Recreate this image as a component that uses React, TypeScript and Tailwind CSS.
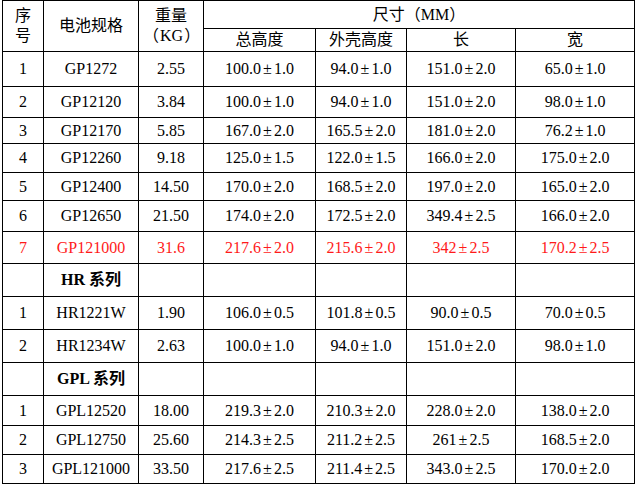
import React from "react";

// ─── Battery spec table ──────────────────────────────────────────────────────

type Row = {
  no?: string;
  model: string;
  weight?: string;
  total?: string;
  shell?: string;
  len?: string;
  wid?: string;
  h: number;
  red?: boolean;
  group?: boolean;
};

const rows: Row[] = [
  { no: "1", model: "GP1272", weight: "2.55", total: "100.0±1.0", shell: "94.0±1.0", len: "151.0±2.0", wid: "65.0±1.0", h: 35 },
  { no: "2", model: "GP12120", weight: "3.84", total: "100.0±1.0", shell: "94.0±1.0", len: "151.0±2.0", wid: "98.0±1.0", h: 31 },
  { no: "3", model: "GP12170", weight: "5.85", total: "167.0±2.0", shell: "165.5±2.0", len: "181.0±2.0", wid: "76.2±1.0", h: 26 },
  { no: "4", model: "GP12260", weight: "9.18", total: "125.0±1.5", shell: "122.0±1.5", len: "166.0±2.0", wid: "175.0±2.0", h: 29 },
  { no: "5", model: "GP12400", weight: "14.50", total: "170.0±2.0", shell: "168.5±2.0", len: "197.0±2.0", wid: "165.0±2.0", h: 28 },
  { no: "6", model: "GP12650", weight: "21.50", total: "174.0±2.0", shell: "172.5±2.0", len: "349.4±2.5", wid: "166.0±2.0", h: 31 },
  { no: "7", model: "GP121000", weight: "31.6", total: "217.6±2.0", shell: "215.6±2.0", len: "342±2.5", wid: "170.2±2.5", h: 32, red: true },
  { model: "HR 系列", h: 33, group: true },
  { no: "1", model: "HR1221W", weight: "1.90", total: "106.0±0.5", shell: "101.8±0.5", len: "90.0±0.5", wid: "70.0±0.5", h: 33 },
  { no: "2", model: "HR1234W", weight: "2.63", total: "100.0±1.0", shell: "94.0±1.0", len: "151.0±2.0", wid: "98.0±1.0", h: 33 },
  { model: "GPL 系列", h: 33, group: true },
  { no: "1", model: "GPL12520", weight: "18.00", total: "219.3±2.0", shell: "210.3±2.0", len: "228.0±2.0", wid: "138.0±2.0", h: 30 },
  { no: "2", model: "GPL12750", weight: "25.60", total: "214.3±2.5", shell: "211.2±2.5", len: "261±2.5", wid: "168.5±2.0", h: 29 },
  { no: "3", model: "GPL121000", weight: "33.50", total: "217.6±2.5", shell: "211.4±2.5", len: "343.0±2.5", wid: "170.0±2.0", h: 29 },
];

// splits "100.0±1.0" so the ± sign gets a little breathing room
const Tol = ({ v }: { v?: string }) => {
  if (!v) return null;
  const [a, b] = v.split("±");
  return (
    <span>
      {a}
      <span className="px-[2px]">±</span>
      {b}
    </span>
  );
};

const cell = "border border-black p-0 text-center align-middle";

export default function App() {
  return (
    <div className="bg-white w-[639px] h-[486px] pl-[2px] font-['Liberation_Serif','Noto_Sans_CJK_SC',serif] text-[16px] leading-[20px] text-black">
      <table className="table-fixed border-collapse w-[633px]">
        <colgroup>
          <col className="w-[41px]" />
          <col className="w-[95px]" />
          <col className="w-[65px]" />
          <col className="w-[112px]" />
          <col className="w-[91px]" />
          <col className="w-[109px]" />
          <col className="w-[119px]" />
        </colgroup>
        <thead>
          <tr className="h-[28px]">
            <th rowSpan={2} className={`${cell} font-normal`}>
              <div>序</div>
              <div>号</div>
            </th>
            <th rowSpan={2} className={`${cell} font-normal`}>电池规格</th>
            <th rowSpan={2} className={`${cell} font-normal`}>
              <div>重量</div>
              <div>
                <span className="pl-[4px] pr-[1px]">（</span>KG<span className="pl-[1px] pr-[4px]">）</span>
              </div>
            </th>
            <th colSpan={4} className={`${cell} font-normal`}>尺寸（MM）</th>
          </tr>
          <tr className="h-[23px]">
            <th className={`${cell} font-normal`}>总高度</th>
            <th className={`${cell} font-normal`}>外壳高度</th>
            <th className={`${cell} font-normal`}>长</th>
            <th className={`${cell} font-normal`}>宽</th>
          </tr>
        </thead>
        <tbody>
          {rows.map((r, i) => (
            <tr key={i} style={{ height: r.h }} className={r.red ? "text-[#ff1a1a]" : ""}>
              <td className={cell}>{r.no}</td>
              <td className={`${cell} ${r.group ? "font-bold" : ""}`}>{r.model}</td>
              <td className={cell}>{r.weight}</td>
              <td className={cell}><Tol v={r.total} /></td>
              <td className={cell}><Tol v={r.shell} /></td>
              <td className={cell}><Tol v={r.len} /></td>
              <td className={cell}><Tol v={r.wid} /></td>
            </tr>
          ))}
        </tbody>
      </table>
    </div>
  );
}
